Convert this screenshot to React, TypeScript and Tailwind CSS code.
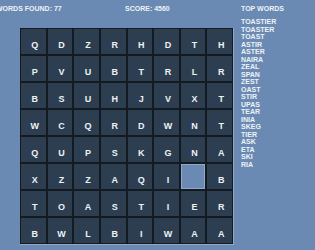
const rows = [
  "QDZRHDTH",
  "PVUBTRLR",
  "BSUHJVXT",
  "WCQRDWNT",
  "QUPSKGNA",
  "XZZAQI B",
  "TOASTIER",
  "BWLBIWAA",
];

const topWords = [
  "TOASTIER",
  "TOASTER",
  "TOAST",
  "ASTIR",
  "ASTER",
  "NAIRA",
  "ZEAL",
  "SPAN",
  "ZEST",
  "OAST",
  "STIR",
  "UPAS",
  "TEAR",
  "INIA",
  "SKEG",
  "TIER",
  "ASK",
  "ETA",
  "SKI",
  "RIA",
];

function Cell({ letter }: { letter: string }) {
  if (letter === " ") {
    return <div className="h-[25px] border border-[#8fa9c9] bg-[#6a8ab3]" />;
  }
  return (
    <div className="flex h-[25px] items-start justify-center bg-[#2c3e50] pt-[12px] pl-[3px] text-[9px] font-bold leading-none text-[#eef2f7]">
      {letter}
    </div>
  );
}

export default function App() {
  return (
    <div
      className="flex h-[250px] w-[315px] overflow-hidden bg-[#6a8ab3] text-[#eef2f7]"
      style={{ fontFamily: '"Liberation Sans", Arial, sans-serif' }}
    >
      <div className="flex w-[241px] shrink-0 flex-col">
        <div className="flex h-[15px] items-center pt-[1px] text-[7px] font-bold leading-none">
          <span className="ml-[-4px] w-[129px] shrink-0">WORDS FOUND: 77</span>
          <span>SCORE: 4560</span>
        </div>
        <div className="ml-[20px] mt-[13px] w-[214px] border-r border-b border-[#8fa9c9]">
          <div className="grid grid-cols-8 gap-[2px] bg-[#141a21] p-[1px]">
            {rows.map((r, i) =>
              r.split("").map((ch, j) => <Cell key={i + "-" + j} letter={ch} />)
            )}
          </div>
        </div>
      </div>
      <div className="flex flex-col pt-[5px] text-[7px] font-bold leading-none">
        <div className="h-[13px]">TOP WORDS</div>
        <ul className="flex flex-col">
          {topWords.map((w) => (
            <li key={w} className="h-[7.5px] leading-[7.5px]">
              {w}
            </li>
          ))}
        </ul>
      </div>
    </div>
  );
}
